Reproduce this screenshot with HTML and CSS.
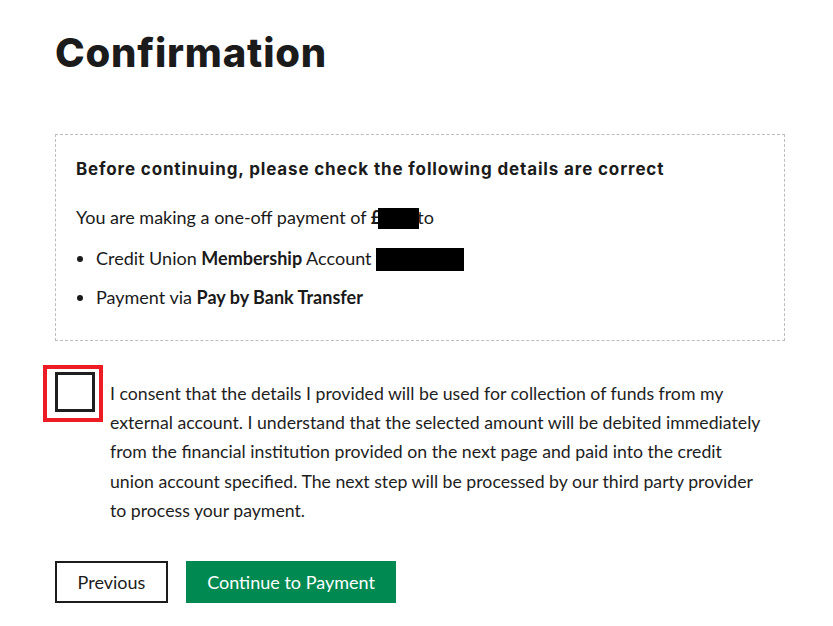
FILE: index.html
```html
<!DOCTYPE html>
<html lang="en">
<head>
<meta charset="utf-8">
<title>Confirmation</title>
<link rel="stylesheet" href="styles.css">
</head>
<body>
<main class="page">
  <h1 class="title">Confirmation</h1>
  <section class="summary">
    <h2 class="summary-title">Before continuing, please check the following details are correct</h2>
    <p class="summary-line">You are making a one-off payment of <strong>£</strong><span class="redact redact-amount"></span>to</p>
    <ul class="summary-list">
      <li>Credit Union <strong>Membership</strong> Account <span class="redact redact-account"></span></li>
      <li>Payment via <strong>Pay by Bank Transfer</strong></li>
    </ul>
  </section>
  <div class="consent">
    <span class="checkbox-wrap"><span class="checkbox"></span><span class="highlight"></span></span>
    <p class="consent-text">I consent that the details I provided will be used for collection of funds from my external account. I understand that the selected amount will be debited immediately from the financial institution provided on the next page and paid into the credit union account specified. The next step will be processed by our third party provider to process your payment.</p>
  </div>
  <div class="actions">
    <button class="btn btn-secondary" type="button">Previous</button>
    <button class="btn btn-primary" type="button">Continue to Payment</button>
  </div>
</main>
</body>
</html>
```

FILE: styles.css
```css
html, body {
  margin: 0;
  padding: 0;
  background: #ffffff;
}
body {
  font-family: "Lato", "Liberation Sans", sans-serif;
  color: #1a1a1a;
}
.page {
  padding: 0 48px 0 55px;
}
.title {
  margin: 0;
  padding-top: 30px;
  font-family: "Inter", "DejaVu Sans", sans-serif;
  font-weight: 800;
  font-size: 40px;
  line-height: 46px;
  letter-spacing: 0.8px;
  color: #1b1b1b;
}
.summary {
  margin-top: 58px;
  width: 730px;
  box-sizing: border-box;
  border: 1px dashed #bdbdbd;
  padding: 22px 20px 0 20px;
  height: 207px;
}
.summary-title {
  margin: 0;
  font-family: "Inter", "DejaVu Sans", sans-serif;
  font-weight: 700;
  font-size: 17px;
  line-height: 24px;
  letter-spacing: 0.85px;
  color: #1b1b1b;
}
.summary-line {
  margin: 23px 0 0 0;
  font-size: 18px;
  line-height: 26px;
}
.summary-line strong { font-weight: 700; }
.redact {
  display: inline-block;
  background: #000;
}
.redact-amount {
  width: 41px;
  height: 21px;
  margin-left: -3px;
  margin-right: -2px;
  vertical-align: -5px;
}
.redact-account {
  width: 88px;
  height: 23px;
  vertical-align: -6px;
}
.summary-list {
  margin: 15px 0 0 0;
  padding-left: 20px;
  font-size: 18px;
  line-height: 26px;
}
.summary-list li {
  margin: 0 0 13px 0;
}
.summary-list strong { font-weight: 700; }
.consent {
  display: flex;
  gap: 15px;
  margin-top: 31px;
  width: 730px;
}
.checkbox-wrap {
  position: relative;
  flex: 0 0 40px;
  height: 40px;
}
.checkbox {
  display: block;
  box-sizing: border-box;
  width: 40px;
  height: 40px;
  border: 3px solid #1f1f1f;
  background: #fff;
}
.highlight {
  position: absolute;
  left: -12px;
  top: -7px;
  width: 60px;
  height: 57px;
  box-sizing: border-box;
  border: 4px solid #ed1c24;
}
.consent-text {
  margin: 7px 0 0 0;
  width: 655px;
  font-size: 17.7px;
  line-height: 29.2px;
  color: #1e1e1e;
}
.actions {
  display: flex;
  gap: 18px;
  margin-top: 36px;
}
.btn {
  font-family: "Lato", "Liberation Sans", sans-serif;
  font-size: 18px;
  height: 42px;
  box-sizing: border-box;
  padding: 0 10px;
  cursor: pointer;
}
.btn-secondary {
  width: 113px;
  border: 2.5px solid #1c1c1c;
  background: #fff;
  color: #1c1c1c;
}
.btn-primary {
  width: 210px;
  border: 0;
  background: #008a52;
  color: #fff;
}
```
